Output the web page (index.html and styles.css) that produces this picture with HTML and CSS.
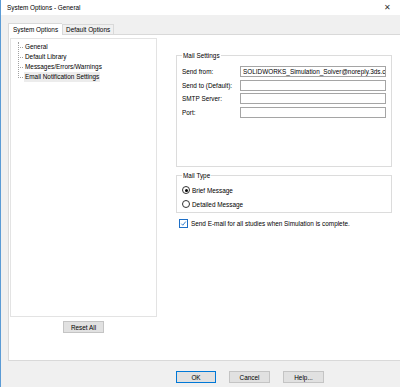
FILE: index.html
```html
<!DOCTYPE html>
<html lang="en">
<head>
    <meta charset="UTF-8">
    <title>System Options - General</title>
    <link rel="stylesheet" href="styles.css">
</head>
<body>
    <div class="window">
        <div class="titlebar">
            <span class="title">System Options - General</span>
            <span class="close">&#x2715;</span>
        </div>
        <div class="tabs">
            <div class="tab active">System Options</div>
            <div class="tab">Default Options</div>
        </div>
        <div class="panel">
            <div class="left">
                <ul class="tree">
                    <li>General</li>
                    <li>Default Library</li>
                    <li>Messages/Errors/Warnings</li>
                    <li class="selected">Email Notification Settings</li>
                </ul>
                <button class="btn reset">Reset All</button>
            </div>
            <div class="right">
                <fieldset class="group mail-settings">
                    <legend>Mail Settings</legend>
                    <div class="row">
                        <label>Send from:</label>
                        <div class="field">SOLIDWORKS_Simulation_Solver@noreply.3ds.com</div>
                    </div>
                    <div class="row">
                        <label>Send to (Default):</label>
                        <div class="field"></div>
                    </div>
                    <div class="row">
                        <label>SMTP Server:</label>
                        <div class="field"></div>
                    </div>
                    <div class="row">
                        <label>Port:</label>
                        <div class="field"></div>
                    </div>
                </fieldset>
                <fieldset class="group mail-type">
                    <legend>Mail Type</legend>
                    <div class="option"><span class="radio checked"></span>Brief Message</div>
                    <div class="option"><span class="radio"></span>Detailed Message</div>
                </fieldset>
                <div class="check-row">
                    <span class="checkbox">
                        <svg width="8" height="8" viewBox="0 0 8 8"><path d="M1.5 4.2 L3.2 6 L6.6 1.8" fill="none" stroke="#1e6fc7" stroke-width="1"/></svg>
                    </span>
                    Send E-mail for all studies when Simulation is complete.
                </div>
            </div>
        </div>
        <div class="footer">
            <button class="btn default">OK</button>
            <button class="btn">Cancel</button>
            <button class="btn">Help...</button>
        </div>
    </div>
</body>
</html>
```

FILE: styles.css
```css
body {
    margin: 0;
    font-family: "Liberation Sans", Arial, sans-serif;
    font-size: 6.4px;
    color: #000;
    background-color: #f0f0f0;
}
.window {
    width: 399px;
    height: 387px;
    border-left: 1px solid #5b9bd5;
    display: flex;
    flex-direction: column;
    overflow: hidden;
}
.titlebar {
    height: 15px;
    background-color: #fff;
    display: flex;
    align-items: center;
    justify-content: space-between;
    padding: 0 9px 0 6px;
}
.close {
    font-size: 8px;
    color: #333;
}
.tabs {
    height: 19px;
    display: flex;
    align-items: flex-end;
    padding-left: 7px;
}
.tab {
    height: 9px;
    line-height: 9px;
    padding: 0 3px;
    border: 1px solid #d9d9d9;
    border-bottom: none;
    background-color: #f0f0f0;
}
.tab.active {
    height: 11px;
    line-height: 11px;
    padding: 0 4px;
    background-color: #fff;
    position: relative;
    top: 1px;
    border-right: none;
}
.panel {
    height: 327px;
    margin-left: 7px;
    background-color: #fff;
    border: 1px solid #d9d9d9;
    border-right: none;
    display: flex;
    padding: 3px 0 0 1px;
    box-sizing: border-box;
}
.left {
    width: 147px;
    display: flex;
    flex-direction: column;
    align-items: center;
}
.tree {
    list-style: none;
    margin: 0;
    padding: 3px 0 0 13px;
    width: 100%;
    height: 279px;
    box-sizing: border-box;
    border: 1px solid #e3e3e3;
    position: relative;
}
.tree::before {
    content: "";
    position: absolute;
    left: 7px;
    top: 3px;
    height: 34px;
    border-left: 1px dotted #a0a0a0;
}
.tree li {
    height: 10px;
    line-height: 10px;
    position: relative;
    padding: 0 1px;
    width: fit-content;
}
.tree li::before {
    content: "";
    position: absolute;
    left: -6px;
    top: 5px;
    width: 5px;
    border-top: 1px dotted #a0a0a0;
}
.tree li.selected {
    background-color: #ececec;
}
.btn {
    font-family: inherit;
    font-size: 6.4px;
    height: 12px;
    padding: 0;
    background-color: #e1e1e1;
    border: 1px solid #c4c4c4;
    color: #000;
}
.reset {
    width: 41px;
    margin-top: 4px;
}
.right {
    margin-left: 19px;
    width: 216px;
}
.group {
    margin: 0;
    border: 1px solid #dcdcdc;
    padding: 0 0 0 5px;
    box-sizing: border-box;
}
.group legend {
    padding: 0 1px;
    line-height: 9px;
}
.mail-settings {
    margin-top: 13px;
    height: 116px;
    padding-top: 6px;
    display: flex;
    flex-direction: column;
    gap: 2.5px;
}
.row {
    display: flex;
    align-items: center;
    height: 11px;
}
.row label {
    width: 58px;
}
.field {
    width: 146px;
    height: 11px;
    line-height: 9px;
    box-sizing: border-box;
    border: 1px solid #a5a5a5;
    padding: 0 2px;
    white-space: nowrap;
    overflow: hidden;
}
.mail-type {
    margin-top: 4px;
    height: 42px;
    padding-top: 3px;
}
.option {
    display: flex;
    align-items: center;
    height: 14px;
}
.radio {
    width: 6px;
    height: 6px;
    border: 1px solid #333;
    border-radius: 50%;
    margin-right: 2px;
    position: relative;
}
.radio.checked::after {
    content: "";
    position: absolute;
    left: 1.5px;
    top: 1.5px;
    width: 3px;
    height: 3px;
    border-radius: 50%;
    background-color: #000;
}
.check-row {
    display: flex;
    align-items: center;
    margin: 5px 0 0 3px;
    height: 10px;
}
.checkbox {
    width: 7px;
    height: 7px;
    border: 1px solid #1e6fc7;
    margin-right: 3px;
    display: flex;
}
.checkbox svg {
    width: 7px;
    height: 7px;
}
.footer {
    flex: 1;
    display: flex;
    gap: 13px;
    padding: 10px 0 0 175px;
}
.footer .btn {
    width: 41px;
    height: 12px;
}
.footer .btn.default {
    width: 40px;
    border-color: #0078d7;
}
```
